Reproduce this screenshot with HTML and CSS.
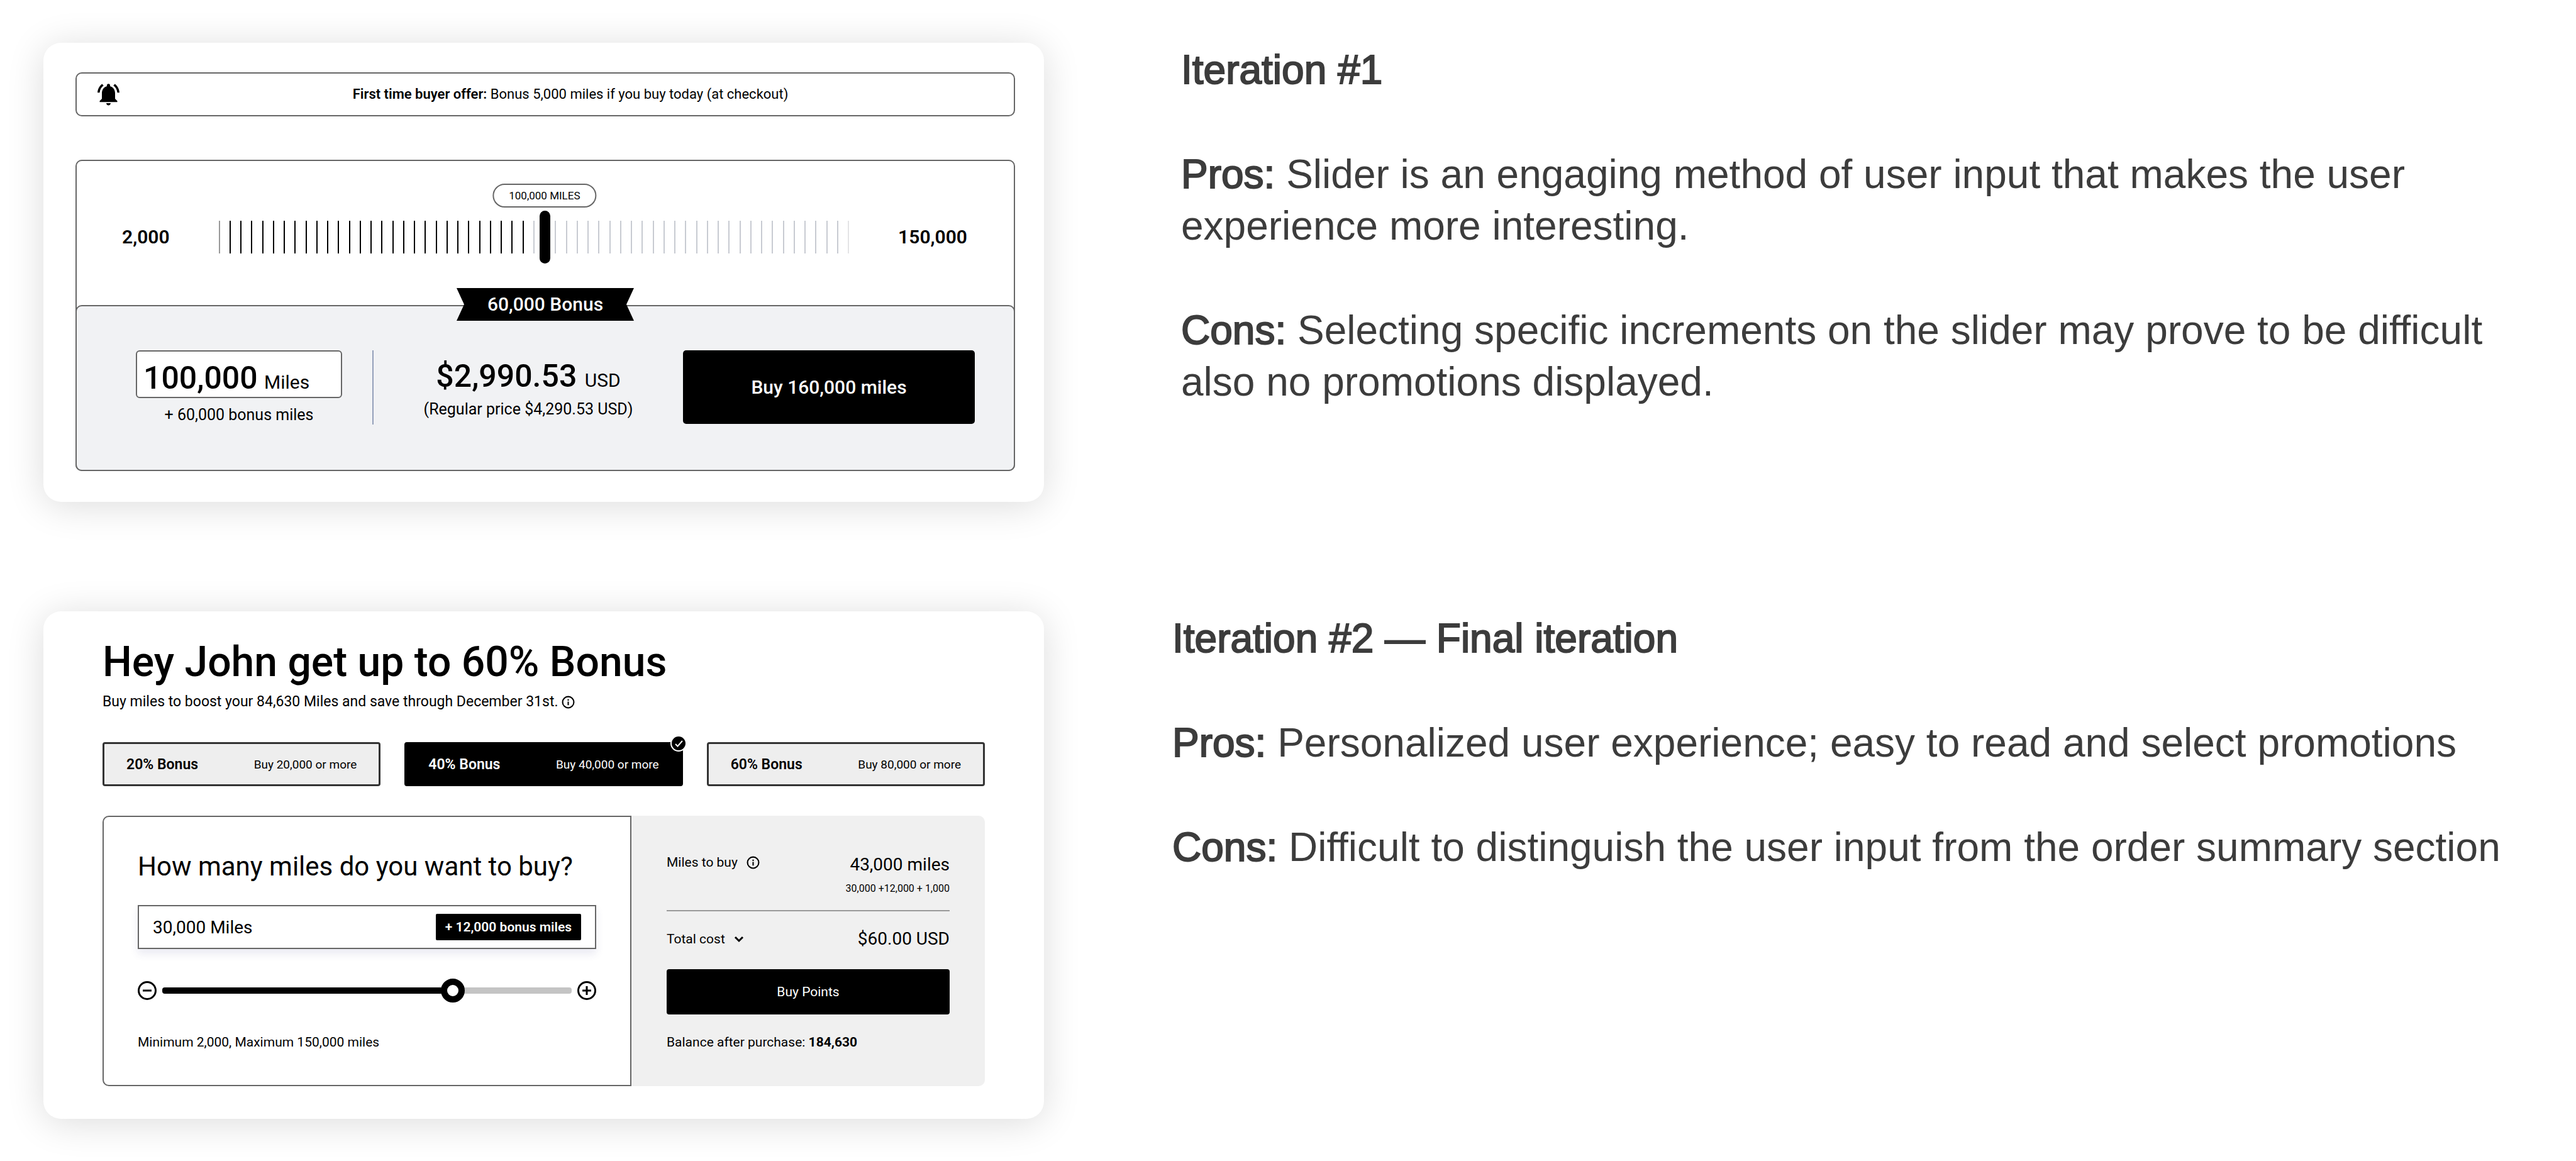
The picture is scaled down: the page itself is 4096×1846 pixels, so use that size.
FILE: index.html
```html
<!DOCTYPE html>
<html lang="en">
<head>
<meta charset="utf-8">
<title>Buy miles: design iterations</title>
<link rel="stylesheet" href="styles.css">
</head>
<body>
<main class="page">
  <section class="iteration">
    <div class="card offer-card">
      <div class="banner">
        <svg class="bell" viewBox="2 2.3 20 20" aria-hidden="true"><path d="M7.58 4.08L6.15 2.65C3.75 4.48 2.17 7.3 2.03 10.5h2c.15-2.65 1.51-4.97 3.55-6.42zm12.39 6.42h2c-.15-3.2-1.73-6.02-4.12-7.85l-1.42 1.43c2.02 1.45 3.39 3.77 3.54 6.42zM18 11c0-3.07-1.64-5.64-4.5-6.32V4c0-.83-.67-1.5-1.5-1.5s-1.5.67-1.5 1.5v.68C7.63 5.36 6 7.92 6 11v5l-2 2v1h16v-1l-2-2zM12 22c1.100 0 2-.9 2-2h-4c0 1.100.89 2 2 2z"/></svg>
        <p class="banner-text"><b>First time buyer offer:</b> Bonus 5,000 miles if you buy today (at checkout)</p>
      </div>
      <div class="panel">
        <div class="scale">
          <span class="scale-end">2,000</span>
          <div class="ticks">
            <i></i><i></i><i></i><i></i><i></i><i></i><i></i><i></i><i></i><i></i><i></i><i></i><i></i><i></i><i></i><i></i><i></i><i></i><i></i><i></i><i></i><i></i><i></i><i></i><i></i><i></i><i></i><i></i><i></i><i></i><i></i><i></i><i></i><i></i><i></i><i></i><i></i><i></i><i></i><i></i><i></i><i></i><i></i><i></i><i></i><i></i><i></i><i></i><i></i><i></i><i></i><i></i><i></i><i></i><i></i><i></i><i></i><i></i><i></i>
            <input class="tick-range" type="range" min="0" max="58" value="30" aria-label="Miles" aria-valuetext="100,000 miles">
            <output class="pill" style="left: 51.7%">100,000 MILES</output>
          </div>
          <span class="scale-end">150,000</span>
        </div>
        <div class="checkout">
          <div class="ribbon">60,000 Bonus</div>
          <div class="amount">
            <label class="amount-box">
              <input class="amount-input" type="text" value="100,000">
              <span class="unit">Miles</span>
            </label>
            <p class="note">+ 60,000 bonus miles</p>
          </div>
          <div class="price">
            <p class="price-line"><span class="price-value">$2,990.53</span> <span class="unit">USD</span></p>
            <p class="note">(Regular price $4,290.53 USD)</p>
          </div>
          <button class="buy" type="button">Buy 160,000 miles</button>
        </div>
      </div>
    </div>
    <div class="notes notes-inset">
      <h2>Iteration #1</h2>
      <p><strong>Pros:</strong> Slider is an engaging method of user input that makes the user experience more interesting.</p>
      <p><strong>Cons:</strong> Selecting specific increments on the slider may prove to be difficult also no promotions displayed.</p>
    </div>
  </section>

  <section class="iteration">
    <div class="card promo-card">
      <h1 class="headline">Hey John get up to 60% Bonus</h1>
      <p class="subline">Buy miles to boost your 84,630 Miles and save through December 31st.
        <svg class="info" viewBox="0 0 20 20" aria-hidden="true"><circle cx="10" cy="10" r="8.500"/><path d="M10 9v5.500M10 5.500v2"/></svg>
      </p>
      <div class="promos">
        <button class="promo" type="button" aria-pressed="false"><b>20% Bonus</b><span>Buy 20,000 or more</span></button>
        <button class="promo selected" type="button" aria-pressed="true"><b>40% Bonus</b><span>Buy 40,000 or more</span>
          <svg class="check" viewBox="0 0 26 26" aria-hidden="true"><circle cx="13" cy="13" r="12" fill="#000" stroke="#fff" stroke-width="2"/><path d="M8 14l3.500 3.500L19 9" fill="none" stroke="#fff" stroke-width="2"/></svg>
        </button>
        <button class="promo" type="button" aria-pressed="false"><b>60% Bonus</b><span>Buy 80,000 or more</span></button>
      </div>
      <div class="order">
        <div class="entry">
          <h2 class="question"><label for="miles">How many miles do you want to buy?</label></h2>
          <div class="field">
            <input class="field-input" id="miles" type="text" value="30,000 Miles">
            <span class="tag">+ 12,000 bonus miles</span>
          </div>
          <div class="slider">
            <button class="step" type="button" aria-label="Fewer miles"><svg viewBox="0 0 30 30"><circle cx="15" cy="15" r="13.500"/><path d="M8 15h14"/></svg></button>
            <input class="range" type="range" min="0" max="1000" value="722" aria-label="Miles to buy">
            <button class="step" type="button" aria-label="More miles"><svg viewBox="0 0 30 30"><circle cx="15" cy="15" r="13.500"/><path d="M8 15h14M15 8v14"/></svg></button>
          </div>
          <p class="small">Minimum 2,000, Maximum 150,000 miles</p>
        </div>
        <div class="summary">
          <div class="row row-top">
            <p class="small with-icon">Miles to buy <svg class="info" viewBox="0 0 20 20" aria-hidden="true"><circle cx="10" cy="10" r="8.500"/><path d="M10 9v5.500M10 5.500v2"/></svg></p>
            <div class="figures">
              <p class="figure">43,000 miles</p>
              <p class="sum">30,000 +12,000 + 1,000</p>
            </div>
          </div>
          <div class="row row-total">
            <button class="small with-icon toggle" type="button">Total cost <svg class="chevron" viewBox="0 0 16 12" aria-hidden="true"><path d="M2 3l6 6 6-6"/></svg></button>
            <p class="figure">$60.00 USD</p>
          </div>
          <button class="points" type="button">Buy Points</button>
          <p class="small">Balance after purchase: <b>184,630</b></p>
        </div>
      </div>
    </div>
    <div class="notes">
      <h2>Iteration #2 — Final iteration</h2>
      <p><strong>Pros:</strong> Personalized user experience; easy to read and select promotions</p>
      <p><strong>Cons:</strong> Difficult to distinguish the user input from the order summary section</p>
    </div>
  </section>
</main>
</body>
</html>
```
FILE: styles.css
```css
* { box-sizing: border-box; }

body {
  margin: 0;
  background: #fff;
  color: #000;
  font-family: Roboto, "Liberation Sans", sans-serif;
}

h1, h2, p { margin: 0; font-weight: 400; }

button, input {
  margin: 0;
  padding: 0;
  border: 0;
  background: none;
  color: inherit;
  font: inherit;
}

.page {
  display: flex;
  flex-direction: column;
  gap: 174px;
  padding: 68px 69px;
}

.iteration {
  display: grid;
  grid-template-columns: 1591fr 2163fr;
  column-gap: 204px;
  align-items: start;
}

.card {
  border-radius: 28px;
  background: #fff;
  box-shadow: 0 6px 60px rgba(0, 0, 0, .14);
}

/* Notes beside each card */
.notes {
  display: flex;
  flex-direction: column;
  gap: 84px;
  padding-top: 2px;
  color: #3c3c3c;
  font-family: "Liberation Sans", Arial, sans-serif;
  font-size: 64px;
  line-height: 82px;
}
.notes-inset { margin-left: 14px; }
.notes h2 { font-size: 64px; }
.notes h2, .notes strong {
  font-weight: 400;
  -webkit-text-stroke: 2px #3c3c3c;
}

/* First card */
.offer-card { padding: 47px 46px 49px 51px; }

.banner {
  display: flex;
  align-items: center;
  gap: 12px;
  height: 70px;
  padding-left: 33px;
  border: 2px solid #666;
  border-radius: 10px;
}
.bell { width: 35px; height: 35px; }
.banner-text {
  flex: 1;
  text-align: center;
  font-size: 22px;
  line-height: 30px;
}
.banner-text b { font-weight: 600; }

.panel {
  margin-top: 69px;
  border: 2px solid #666;
  border-radius: 10px;
}
.scale {
  display: flex;
  align-items: center;
  gap: 78px;
  padding: 79px 74px 66px 72px;
}
.scale-end {
  font-size: 30px;
  font-weight: 600;
  line-height: 84px;
}
.ticks {
  position: relative;
  display: flex;
  flex: 1;
  justify-content: space-between;
}
.ticks i { width: 2px; height: 52px; background: #000; }
.ticks i:first-child { background: #999; }
.ticks i:nth-of-type(n+30) { background: #c8cbd2; }
.ticks i:nth-of-type(31) { visibility: hidden; }
.ticks i:nth-of-type(59) { background: #e4e4e6; }
.tick-range {
  position: absolute;
  inset: -16px -8px;
  height: 84px;
  appearance: none;
}
.tick-range::-webkit-slider-thumb {
  appearance: none;
  width: 17px;
  height: 84px;
  border-radius: 9px;
  background: #000;
}
.pill {
  position: absolute;
  bottom: calc(100% + 21px);
  height: 38px;
  padding: 0 24px;
  border: 2px solid #666;
  border-radius: 19px;
  transform: translateX(-50%);
  font-size: 17px;
  line-height: 35px;
  white-space: nowrap;
}

.checkout {
  position: relative;
  display: flex;
  margin: 0 -2px -2px;
  padding: 70px 62px 72px 94px;
  border: 2px solid #666;
  border-radius: 10px;
  background: #f1f2f4;
}
.ribbon {
  position: absolute;
  top: -29px;
  left: 50%;
  width: 282px;
  margin-left: -141px;
  background: #000;
  clip-path: polygon(0 0, 100% 0, calc(100% - 12px) 50%, 100% 100%, 0 100%, 12px 50%);
  color: #fff;
  font-size: 30px;
  font-weight: 500;
  line-height: 52px;
  text-align: center;
}
.amount { width: 328px; margin-right: 48px; }
.amount-box {
  display: flex;
  align-items: baseline;
  height: 76px;
  padding: 12px 10px 0;
  border: 2px solid #666;
  border-radius: 6px;
  background: #fff;
}
.amount-input {
  width: 192px;
  height: 60px;
  font-size: 50px;
  font-weight: 500;
  line-height: 60px;
}
.unit { font-size: 30px; line-height: 30px; }
.note {
  margin-top: 12px;
  font-size: 25px;
  line-height: 30px;
  text-align: center;
}
.price {
  flex: 1;
  padding-top: 11px;
  border-left: 2px solid #94a0ba;
  white-space: nowrap;
}
.price-line { font-size: 50px; line-height: 60px; text-align: center; }
.price-value { font-weight: 500; }
.price .note { margin-top: 8px; }
.buy {
  width: 464px;
  height: 117px;
  border-radius: 5px;
  background: #000;
  color: #fff;
  font-size: 30px;
  font-weight: 500;
}

/* Second card */
.promo-card { padding: 43px 94px 52px; }
.headline {
  font-size: 66px;
  font-weight: 500;
  line-height: 76px;
}
.subline {
  display: flex;
  align-items: center;
  gap: 6px;
  margin-top: 10px;
  font-size: 23px;
  line-height: 30px;
}
.info {
  width: 21px;
  height: 21px;
  fill: none;
  stroke: #000;
  stroke-width: 2;
}

.promos {
  display: grid;
  grid-template-columns: repeat(3, 1fr);
  gap: 38px;
  margin-top: 49px;
}
.promo {
  position: relative;
  display: flex;
  align-items: center;
  justify-content: space-between;
  height: 70px;
  padding: 0 35px;
  border: 3px solid #333;
  border-radius: 4px;
  background: #eee;
  font-size: 19px;
}
.promo b { font-size: 23px; font-weight: 600; }
.promo.selected { border-color: #000; background: #000; color: #fff; }
.check {
  position: absolute;
  top: -14px;
  right: -9px;
  width: 26px;
  height: 26px;
}

.order {
  display: grid;
  grid-template-columns: 841fr 562fr;
  margin-top: 47px;
}
.entry {
  padding: 53px 54px 54px;
  border: 2px solid #666;
  border-radius: 10px 0 0 10px;
}
.question { font-size: 42px; line-height: 52px; }
.field {
  display: flex;
  align-items: center;
  height: 70px;
  margin-top: 35px;
  padding: 0 22px;
  border: 2px solid #666;
  box-shadow: 0 8px 12px rgba(60, 60, 140, .1);
}
.field-input { flex: 1; min-width: 0; font-size: 28px; }
.tag {
  padding: 0 15px;
  border-radius: 2px;
  background: #000;
  color: #fff;
  font-size: 21px;
  font-weight: 600;
  line-height: 42px;
}
.slider {
  display: flex;
  align-items: center;
  gap: 9px;
  margin-top: 47px;
}
.step { width: 30px; height: 30px; }
.step svg {
  display: block;
  fill: none;
  stroke: #000;
  stroke-width: 3;
}
.range { flex: 1; min-width: 0; height: 38px; appearance: none; }
.range::-webkit-slider-runnable-track {
  height: 10px;
  border-radius: 4px;
  background: linear-gradient(90deg, #000 71%, #c4c4c4 71%);
}
.range::-webkit-slider-thumb {
  appearance: none;
  width: 38px;
  height: 38px;
  margin-top: -14px;
  border: 10px solid #000;
  border-radius: 50%;
  background: #fff;
}
.small { font-size: 21px; line-height: 28px; }
.entry .small { margin-top: 49px; }

.summary {
  padding: 60px 56px 56px;
  border-radius: 0 10px 10px 0;
  background: #f0f0f0;
}
.row { display: flex; justify-content: space-between; }
.row-top {
  align-items: flex-start;
  padding-bottom: 24px;
  border-bottom: 2px solid #999;
}
.row-total { align-items: center; margin-top: 26px; }
.with-icon { display: flex; align-items: center; gap: 14px; }
.figures { text-align: right; }
.figure { font-size: 28px; line-height: 36px; }
.sum { margin-top: 10px; font-size: 16px; line-height: 20px; }
.chevron {
  width: 16px;
  height: 12px;
  fill: none;
  stroke: #000;
  stroke-width: 3;
}
.points {
  width: 100%;
  height: 72px;
  margin: 30px 0;
  border-radius: 4px;
  background: #000;
  color: #fff;
  font-size: 21px;
}
```
